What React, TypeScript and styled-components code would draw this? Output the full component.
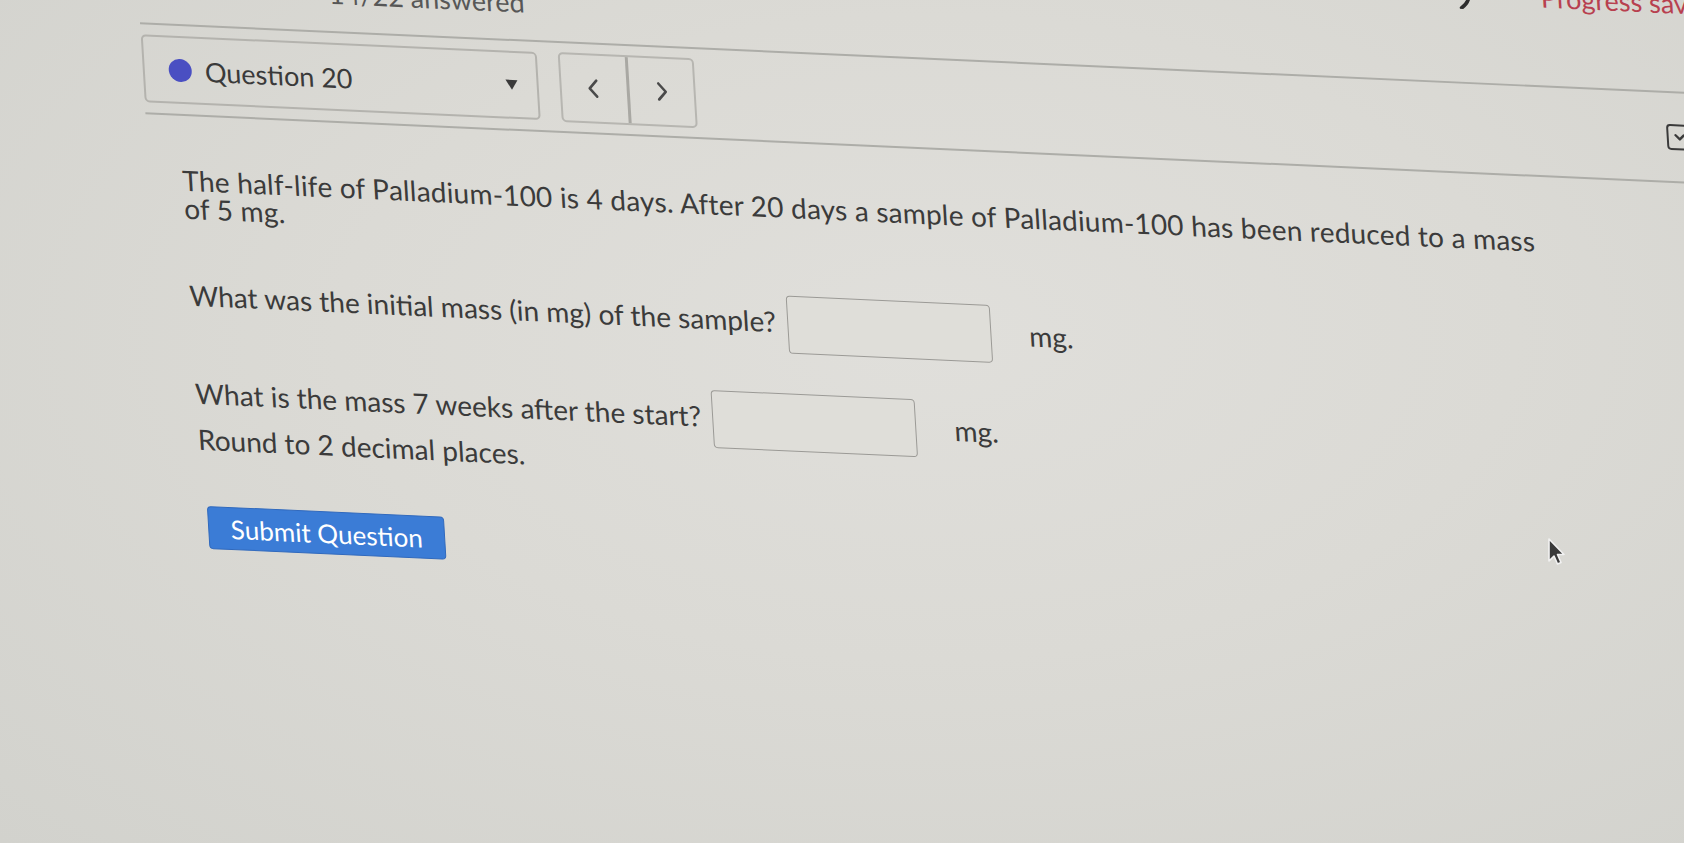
import React from 'react'
import styled, { createGlobalStyle } from 'styled-components'

const GlobalStyle = createGlobalStyle`
  html, body {
    margin: 0;
    height: 100%;
    overflow: hidden;
  }
  body {
    background: radial-gradient(ellipse at 55% 40%, #e0dfdb 0%, #dbdad5 45%, #d2d2cd 100%);
    font-family: Lato, 'Open Sans', sans-serif;
    color: #3b3b3b;
  }
`

// the screen was photographed at an angle, so the whole page is sheared a little
const Page = styled.div`
  width: 1760px;
  margin-top: -100px;
  transform-origin: 0 100px;
  transform: matrix(1, 0.045, 0.06, 1, 0, 0);
`

const TopBar = styled.div`
  display: flex;
  justify-content: space-between;
  height: 116px;
  box-sizing: border-box;
  padding: 13px 39px 0 330px;
  font-size: 27px;
  line-height: 28px;
`

const Answered = styled.div`
  align-self: flex-end;
  margin-bottom: 23px;
  color: #575757;
`

const Status = styled.div`
  align-self: flex-start;
  display: flex;
  align-items: center;
  gap: 66px;
`

const Saved = styled.span`
  color: #b8404f;
`

const Header = styled.header`
  display: flex;
  align-items: center;
  margin-left: 139px;
  padding: 9px 71px 9px 0;
  border-top: 2px solid #adada8;
  border-bottom: 2px solid #adada8;
`

const Select = styled.div`
  box-sizing: border-box;
  width: 396px;
  height: 68px;
  display: flex;
  align-items: center;
  padding: 0 19px 0 24px;
  border: 2px solid #b4b3ae;
  border-radius: 5px;
  font-size: 27px;
  color: #3a3a3a;
`

const Dot = styled.span`
  flex: none;
  width: 23px;
  height: 23px;
  margin-right: 13px;
  border-radius: 50%;
  background: #4a4fc2;
`

const Caret = styled.span`
  margin-left: auto;
  width: 0;
  height: 0;
  border-left: 6.5px solid transparent;
  border-right: 6.5px solid transparent;
  border-top: 10px solid #3a3a3a;
`

const NavGroup = styled.div`
  box-sizing: border-box;
  display: flex;
  width: 136px;
  height: 70px;
  margin-left: 21px;
  border: 2px solid #b7b6b1;
  border-radius: 5px;
`

const NavButton = styled.button`
  flex: 1;
  display: flex;
  align-items: center;
  justify-content: center;
  padding: 0;
  background: transparent;
  border: none;
  & + & {
    border-left: 3px solid #a9a8a3;
  }
`

const HelpIcon = styled.span`
  box-sizing: border-box;
  display: flex;
  align-items: center;
  justify-content: center;
  width: 26px;
  height: 26px;
  margin-left: auto;
  border: 2.5px solid #3a3a3a;
  border-radius: 4px;
`

const Content = styled.main`
  padding-left: 172px;
  margin-top: 50px;
  font-size: 28px;
  line-height: 28px;
`

const Prompt = styled.p`
  width: 1375px;
  margin: 0;
  letter-spacing: 0.2px;
`

const QuestionRow = styled.div<{ $gap: number }>`
  display: flex;
  align-items: center;
  margin-top: ${(p) => p.$gap}px;
`

const QuestionText = styled.span`
  margin-bottom: 6px;
`

const AnswerBox = styled.input`
  box-sizing: border-box;
  width: 204px;
  height: 58px;
  margin-left: 11px;
  border: 1.5px solid #9b9a96;
  border-radius: 4px;
  background: #dfded9;
`

const Unit = styled.span`
  margin-left: 38px;
`

const Note = styled.div`
  margin: 0;
`

const SubmitButton = styled.button`
  box-sizing: border-box;
  width: 237px;
  height: 43px;
  margin: 53px 0 0 5px;
  padding: 0;
  border: 1px solid #3069bd;
  border-radius: 4px;
  background: #3b7cd6;
  color: #fff;
  font-family: Lato, 'Open Sans', sans-serif;
  font-size: 26px;
`

const Cursor = styled.svg`
  position: fixed;
  left: 1546px;
  top: 537px;
`

const Chevron = ({ right }: { right?: boolean }) => (
  <svg width="12" height="20" viewBox="0 0 12 20">
    <polyline
      points={right ? '3,2 10,10 3,18' : '9,2 2,10 9,18'}
      fill="none"
      stroke="#4a4a4a"
      strokeWidth="2.6"
      strokeLinecap="round"
      strokeLinejoin="round"
    />
  </svg>
)

export default function App() {
  return (
    <>
      <GlobalStyle />
      <Page>
        <TopBar>
          <Answered>14/22 answered</Answered>
          <Status>
            <svg width="30" height="30" viewBox="0 0 30 30">
              <path d="M20 2 C27 10 26 22 16 29" fill="none" stroke="#2e2e2e" strokeWidth="3.5" strokeLinecap="round" />
            </svg>
            <Saved>Progress saved</Saved>
          </Status>
        </TopBar>

        <Header>
          <Select>
            <Dot />
            Question 20
            <Caret />
          </Select>
          <NavGroup>
            <NavButton>
              <Chevron />
            </NavButton>
            <NavButton>
              <Chevron right />
            </NavButton>
          </NavGroup>
          <HelpIcon>
            <svg width="12" height="8" viewBox="0 0 12 8">
              <polyline points="2,2 6,6 10,2" fill="none" stroke="#3a3a3a" strokeWidth="2.4" strokeLinecap="round" strokeLinejoin="round" />
            </svg>
          </HelpIcon>
        </Header>

        <Content>
          <Prompt>
            The half-life of Palladium-100 is 4 days. After 20 days a sample of Palladium-100 has been reduced to a mass of 5 mg.
          </Prompt>

          <QuestionRow $gap={47}>
            <QuestionText>What was the initial mass (in mg) of the sample?</QuestionText>
            <AnswerBox type="text" />
            <Unit>mg.</Unit>
          </QuestionRow>

          <QuestionRow $gap={40}>
            <QuestionText>What is the mass 7 weeks after the start?</QuestionText>
            <AnswerBox type="text" />
            <Unit>mg.</Unit>
          </QuestionRow>
          <Note>Round to 2 decimal places.</Note>

          <SubmitButton>Submit Question</SubmitButton>
        </Content>
      </Page>

      <Cursor width="20" height="30" viewBox="0 0 20 30">
        <path d="M3 2 L3 24 L8 19 L11.5 27 L15 25.5 L11.5 17.5 L18 17.5 Z" fill="#3a3a3a" stroke="#f2f2f2" strokeWidth="1.6" strokeLinejoin="round" />
      </Cursor>
    </>
  )
}
